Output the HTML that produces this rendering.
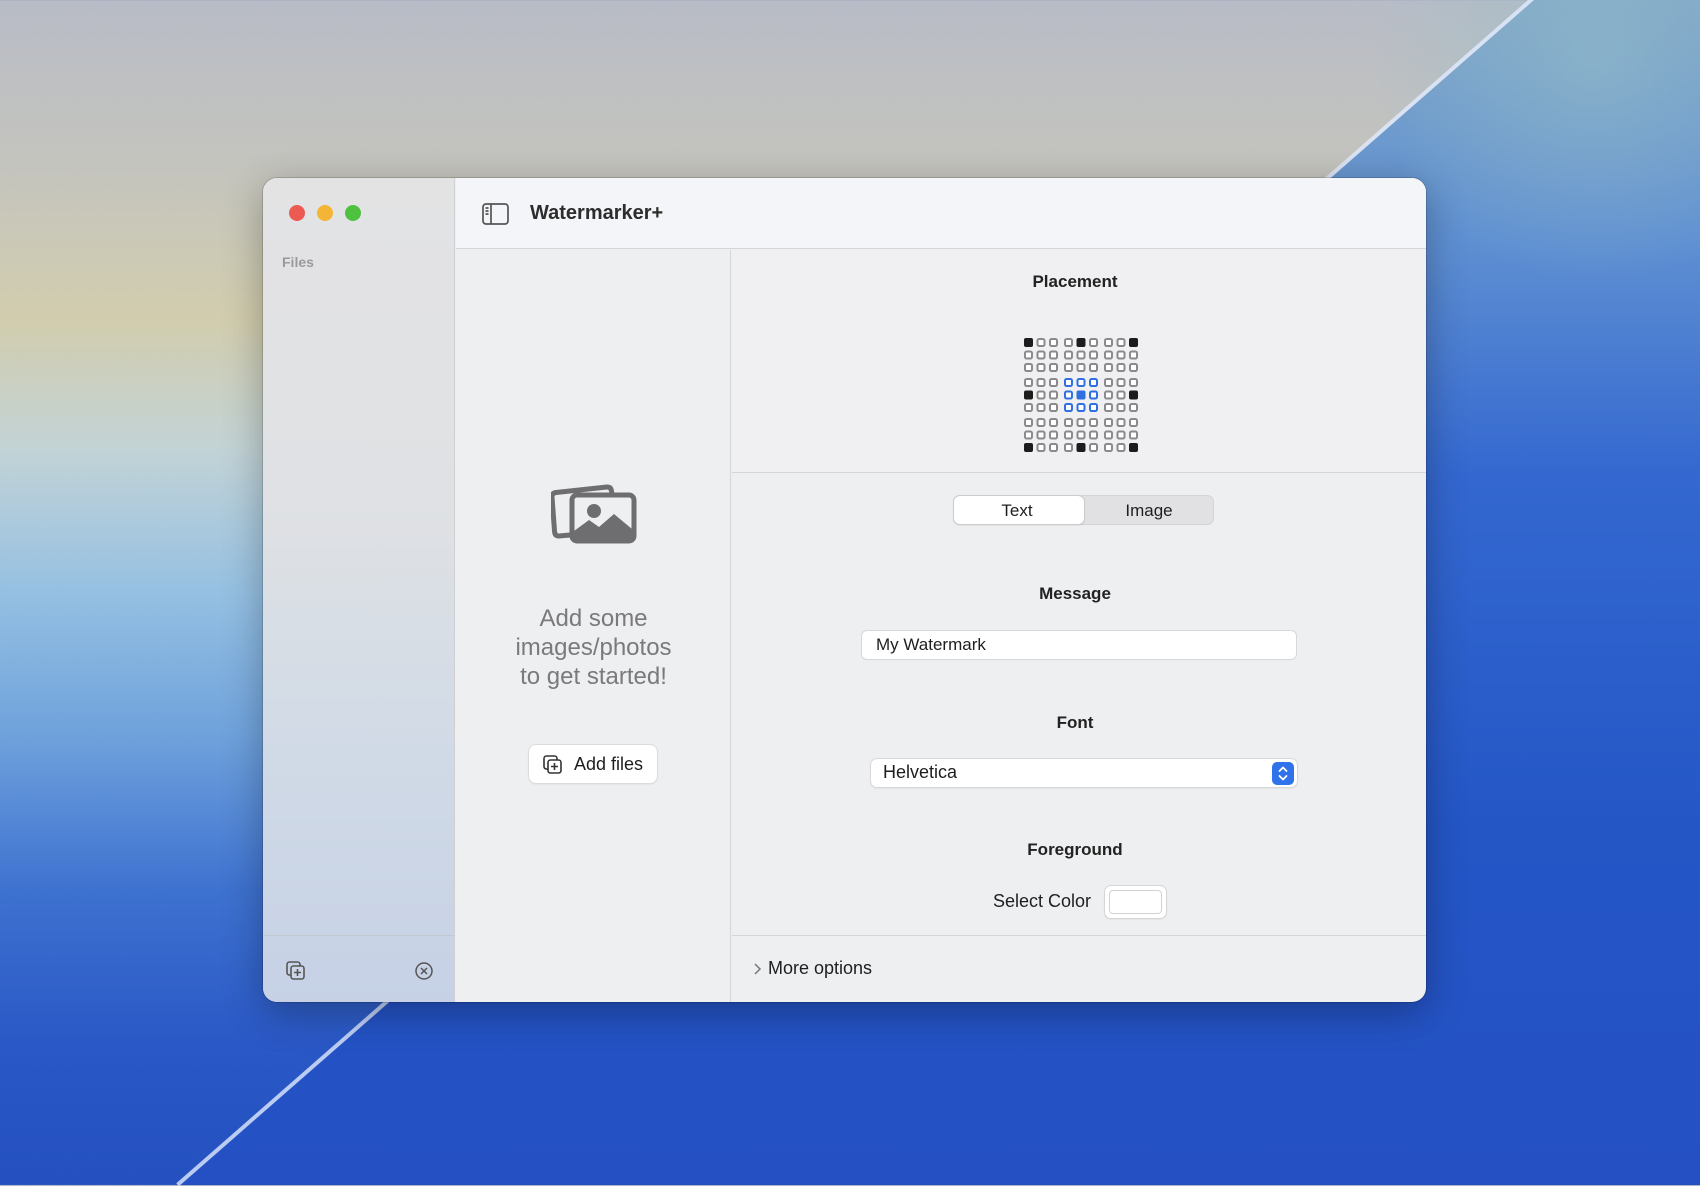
<!DOCTYPE html>
<html><head><meta charset="utf-8"><style>
*{margin:0;padding:0;box-sizing:border-box}
body{width:1700px;height:1185px;overflow:hidden;position:relative;font-family:"Liberation Sans",sans-serif;
background:linear-gradient(180deg,#b8bcc6 0%,#c4c4be 14%,#d2cdae 27%,#c2d3d6 38%,#95c0e2 50%,#6fa2dc 62%,#3e72d0 75%,#2a58c6 88%,#2450c0 100%);}
.right{position:absolute;inset:0;clip-path:polygon(1534px 0,1700px 0,1700px 1185px,179px 1185px);
background:linear-gradient(180deg,#7fa6c8 0%,#5f90d2 20%,#3468d0 40%,#2456c6 70%,#2450c4 100%)}
.streak{position:absolute;height:4px;background:rgba(225,235,255,.8);transform-origin:0 0;}
.a{position:absolute}
.win{position:absolute;left:263px;top:178px;width:1163px;height:824px;border-radius:14px;overflow:hidden;background:#eeeff1;box-shadow:0 10px 40px rgba(0,0,0,.3),0 0 0 1px rgba(0,0,0,.15)}
.side{position:absolute;left:0;top:0;width:192px;height:824px;background:linear-gradient(180deg,#e3e3e4 0%,#dfe1e4 40%,#d0dae6 70%,#c6d1e6 100%);border-right:1px solid #d0d0d3}
.t{position:absolute;white-space:nowrap}
.b{font-weight:bold;color:#222;font-size:17px;text-align:center}
</style></head><body>
<div class="right"></div>
<div class="a" style="left:1350px;top:0;width:350px;height:300px;background:radial-gradient(circle at 70% 20%,rgba(150,190,200,.55),rgba(0,0,0,0) 65%)"></div>
<div class="streak" style="left:1534px;top:0;width:1801px;transform:rotate(138.8deg)"></div>
<div class="win">
 <div class="side">
  <div class="a" style="left:26px;top:27px;width:16px;height:16px;border-radius:50%;background:#ed5a52"></div>
  <div class="a" style="left:54px;top:27px;width:16px;height:16px;border-radius:50%;background:#f3b536"></div>
  <div class="a" style="left:82px;top:27px;width:16px;height:16px;border-radius:50%;background:#4fc141"></div>
  <div class="t" style="left:19px;top:76px;font-size:14px;font-weight:bold;color:#9a9a9c">Files</div>
  <div class="a" style="left:0;top:757px;width:192px;height:1px;background:#c4c8d0"></div>
  <svg class="a" style="left:22px;top:782px" width="22" height="22" viewBox="0 0 22 22" fill="none" stroke="#555" stroke-width="1.6"><rect x="2" y="2" width="13" height="13" rx="2.5"/><rect x="6" y="6" width="13" height="13" rx="2.5" fill="#cdd6e6"/><path d="M12.5 9v7M9 12.5h7"/></svg>
  <svg class="a" style="left:151px;top:783px" width="20" height="20" viewBox="0 0 20 20" fill="none" stroke="#555" stroke-width="1.5"><circle cx="10" cy="10" r="8"/><path d="M7 7l6 6M13 7l-6 6"/></svg>
 </div>
 <div class="a" style="left:193px;top:0;width:970px;height:71px;background:#f4f5f8;border-bottom:1px solid #d6d6d9"></div>
 <svg class="a" style="left:219px;top:25px" width="27" height="22" viewBox="0 0 27 22" fill="none" stroke="#555" stroke-width="1.7"><rect x="1" y="1" width="25" height="20" rx="3"/><path d="M9 1v20M3.5 5h3M3.5 8h3M3.5 11h3"/></svg>
 <div class="t" style="left:267px;top:24px;font-size:20px;font-weight:bold;color:#2d2d2d">Watermarker+</div>
 <div class="a" style="left:193px;top:72px;width:275px;height:752px;background:#eeeff1;border-right:1px solid #d6d6d9"></div>
 <svg class="a" style="left:288px;top:296px" width="86" height="70" viewBox="0 0 86 70" fill="none" stroke="#6e6e70" stroke-width="5" stroke-linejoin="round">
  <path d="M19 61 L8 62 Q4 62 3.6 58 L1 23 Q1 19 5 18.5 L56 13 Q60 13 60.5 17 L61 21"/>
  <rect x="21" y="21" width="62" height="46" rx="5"/>
  <circle cx="43" cy="37" r="7" fill="#6e6e70" stroke="none"/>
  <path d="M23 62 L23 57 L38 46 L48 53 L63 40 L81 55 L81 65 L23 65Z" fill="#6e6e70" stroke="none"/>
 </svg>
 <div class="t" style="left:193px;top:426px;width:275px;text-align:center;white-space:normal;font-size:24px;line-height:29px;color:#7a7a7c;padding:0 55px">Add some images/photos to get started!</div>
 <div class="a" style="left:266px;top:567px;width:128px;height:38px;background:#fff;border-radius:7px;box-shadow:0 0 0 1px #dcdcde,0 1px 2px rgba(0,0,0,.12)"></div>
 <svg class="a" style="left:279px;top:576px" width="22" height="22" viewBox="0 0 22 22" fill="none" stroke="#333" stroke-width="1.6"><rect x="2" y="2" width="13" height="13" rx="2.5"/><rect x="6" y="6" width="13" height="13" rx="2.5" fill="#fff"/><path d="M12.5 9v7M9 12.5h7"/></svg>
 <div class="t" style="left:311px;top:576px;font-size:18px;color:#1e1e1e">Add files</div>
 <div class="a" style="left:469px;top:72px;width:694px;height:223px;background:#f0f0f2;border-bottom:1px solid #d6d6d9"></div>
 <div class="t b" style="left:465px;top:94px;width:694px">Placement</div>
 <svg class="a" style="left:760px;top:159px" width="115" height="115" viewBox="0 0 115 115" id="grid"></svg>
 <div class="a" style="left:690px;top:317px;width:261px;height:30px;background:#e1e1e3;border-radius:7px;box-shadow:inset 0 0 0 1px #d4d4d6"></div>
 <div class="a" style="left:691px;top:318px;width:130px;height:28px;background:#fff;border-radius:6px;box-shadow:0 0 0 1px #ccc,0 1px 2px rgba(0,0,0,.15)"></div>
 <div class="t" style="left:689px;top:323px;width:130px;text-align:center;font-size:17px;color:#1e1e1e">Text</div>
 <div class="t" style="left:821px;top:323px;width:130px;text-align:center;font-size:17px;color:#1e1e1e">Image</div>
 <div class="t b" style="left:465px;top:406px;width:694px">Message</div>
 <div class="a" style="left:599px;top:453px;width:434px;height:28px;background:#fff;border-radius:5px;box-shadow:0 0 0 1px #d8d8da,0 1px 1px rgba(0,0,0,.08)"></div>
 <div class="t" style="left:613px;top:457px;font-size:17px;color:#1e1e1e">My Watermark</div>
 <div class="t b" style="left:465px;top:535px;width:694px">Font</div>
 <div class="a" style="left:608px;top:581px;width:426px;height:28px;background:#fff;border-radius:6px;box-shadow:0 0 0 1px #d8d8da,0 1px 2px rgba(0,0,0,.12)"></div>
 <div class="t" style="left:620px;top:584px;font-size:18px;color:#1e1e1e">Helvetica</div>
 <div class="a" style="left:1009px;top:584px;width:22px;height:23px;background:#2f72e9;border-radius:5px"></div>
 <svg class="a" style="left:1009px;top:584px" width="22" height="23" viewBox="0 0 22 23" fill="none" stroke="#fff" stroke-width="1.8" stroke-linecap="round" stroke-linejoin="round"><path d="M7.5 9l3.5-3.5 3.5 3.5M7.5 14l3.5 3.5 3.5-3.5"/></svg>
 <div class="t b" style="left:465px;top:662px;width:694px">Foreground</div>
 <div class="t" style="left:730px;top:713px;font-size:18px;color:#1e1e1e">Select Color</div>
 <div class="a" style="left:842px;top:708px;width:61px;height:32px;background:#fff;border-radius:6px;box-shadow:0 0 0 1px #d6d6d8,0 1px 2px rgba(0,0,0,.12)"></div>
 <div class="a" style="left:847px;top:713px;width:51px;height:22px;background:#fff;border-radius:3px;box-shadow:0 0 0 1px #d2d2d4"></div>
 <div class="a" style="left:469px;top:757px;width:694px;height:1px;background:#d6d6d9"></div>
 <svg class="a" style="left:489px;top:784px" width="10" height="14" viewBox="0 0 10 14" fill="none" stroke="#777" stroke-width="1.5"><path d="M3 2l5 5-5 5"/></svg>
 <div class="t" style="left:505px;top:780px;font-size:18px;color:#1e1e1e">More options</div>
</div>
<script>
var g=document.getElementById('grid'),s='';
var go=[0,40,80],io=[0,12.5,25];
for(var gy=0;gy<3;gy++)for(var gx=0;gx<3;gx++)for(var r=0;r<3;r++)for(var c=0;c<3;c++){
 var x=go[gx]+io[c]+1,y=go[gy]+io[r]+1;
 var center=(gx==1&&gy==1);
 var tr=gy==0?0:gy==1?1:2, tc=gx==0?0:gx==1?1:2;
 var dark=(!center&&r==tr&&c==tc);
 var col=center?'#2f6fe0':'#8a8a8c';
 if(dark||(center&&r==1&&c==1)){s+='<rect x="'+x+'" y="'+y+'" width="9" height="9" rx="2" fill="'+(center?'#2f6fe0':'#1c1c1c')+'"/>';}
 else s+='<rect x="'+(x+1)+'" y="'+(y+1)+'" width="7" height="7" rx="1.6" fill="#fff" stroke="'+col+'" stroke-width="2"/>';
}
g.innerHTML=s;
</script>
</body></html>
